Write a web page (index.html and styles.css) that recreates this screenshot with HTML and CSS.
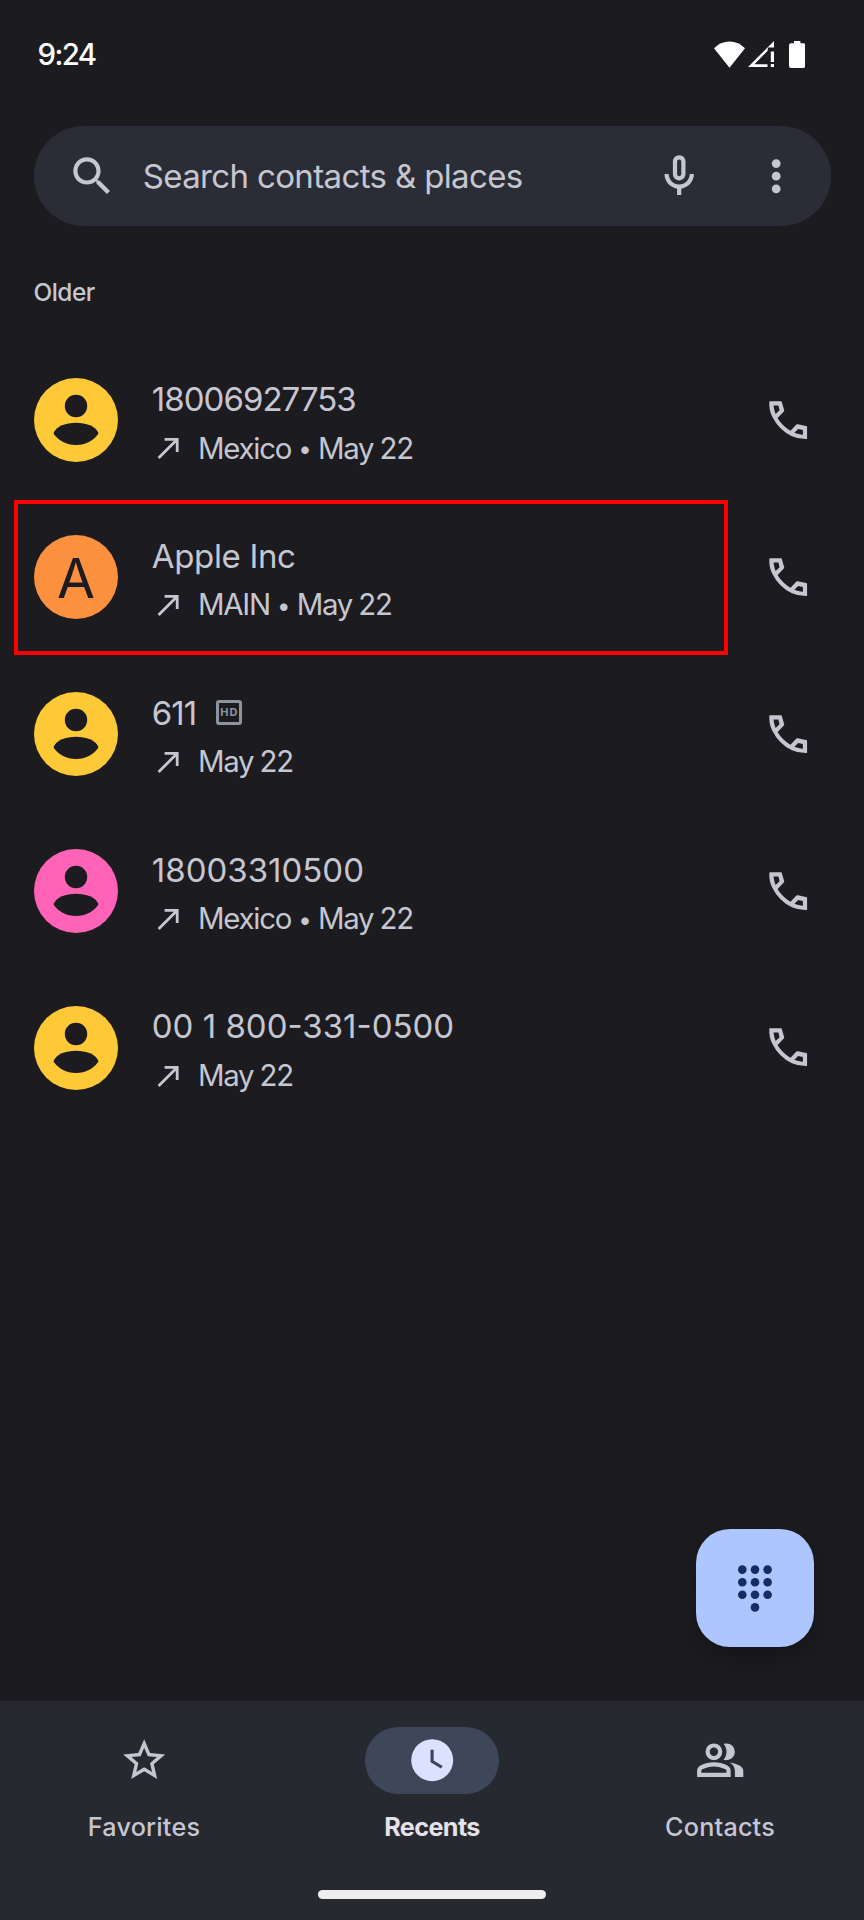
FILE: index.html
```html
<!DOCTYPE html>
<html lang="en">
<head>
<meta charset="utf-8">
<title>Phone - Recents</title>
<link rel="stylesheet" href="styles.css">
</head>
<body>
<svg class="defs" aria-hidden="true">
  <symbol id="call" viewBox="0 0 24 24"><path fill-rule="evenodd" d="M20.6 21Q17 21.05 13.78 19.64T8.225 15.775 4.363 10.225 3 3.4Q3 3 3.4 3H8.6Q8.9 3 9 3.4L10.1 7.3Q10.15 7.6 9.9 7.9L6.975 10.9q.5.925 1.187 1.788t1.513 1.662q.775.775 1.625 1.438t1.8 1.212L15.9 14.1Q16.2 13.8 16.6 13.9L20.5 14.8Q21 14.9 21 15.3V20.6Q21 21 20.6 21ZM6.025 9l1.85-1.75L7.35 5H5.025q.125 1.025.35 2.025T6.025 9Zm8.95 8.95q.975.425 1.988.675t2.037.325v-2.3l-2.25-.5Z"/></symbol>
  <symbol id="made" viewBox="0 0 24 24"><path d="M9 5v2h6.59L4 18.59 5.41 20 17 8.41V15h2V5z"/></symbol>
  <symbol id="person" viewBox="0 0 84 84"><circle cx="42" cy="28" r="11.2"/><path d="M19.8 54.6C22 48.3 32 44.7 42 44.7S62 48.3 64.2 54.6Q64.5 55.6 63.8 56.6C59 63 52 67 42 67S25 63 20.2 56.6Q19.5 55.6 19.8 54.6Z"/></symbol>
</svg>
<div class="screen">
  <header class="status">
    <span class="time">9:24</span>
    <span class="status-icons">
      <svg class="wifi" viewBox="0 0 31 27"><path d="M0 7.3Q6.5.5 15.5.5T31 7.3L15.5 26.8Z"/></svg>
      <svg class="signal" viewBox="0 0 26 26"><path fill-rule="evenodd" d="M26 0V6.5H20L19.5 10 6.5 23.2H19.5V26H0ZM22.8 10.5H26V21H22.8ZM22.8 23H26V26H22.8Z"/></svg>
      <svg class="battery" viewBox="0 0 16.4 27"><path d="M5 0H11.4V2.2H14.4Q16.4 2.2 16.4 4.2V25Q16.4 27 14.4 27H2Q0 27 0 25V4.2Q0 2.2 2 2.2H5Z"/></svg>
    </span>
  </header>

  <div class="search">
    <svg class="icon" viewBox="0 0 24 24"><path d="M15.5 14h-.79l-.28-.27C15.41 12.59 16 11.11 16 9.5 16 5.91 13.09 3 9.5 3S3 5.91 3 9.5 5.91 16 9.5 16c1.61 0 3.09-.59 4.23-1.57l.27.28v.79l5 4.99L20.49 19l-4.99-5zm-6 0C7.01 14 5 11.99 5 9.5S7.01 5 9.5 5 14 7.01 14 9.5 11.99 14 9.5 14z"/></svg>
    <span class="placeholder">Search contacts &amp; places</span>
    <svg class="icon mic" viewBox="0 0 24 24"><path fill-rule="evenodd" d="M12 14c1.66 0 3-1.34 3-3V5c0-1.66-1.34-3-3-3S9 3.34 9 5v6c0 1.66 1.34 3 3 3zM11 5c0-.55.45-1 1-1s1 .45 1 1v6c0 .55-.45 1-1 1s-1-.45-1-1V5zM17 11c0 2.76-2.24 5-5 5s-5-2.24-5-5H5c0 3.53 2.61 6.43 6 6.92V21h2v-3.08c3.39-.49 6-3.39 6-6.92h-2z"/></svg>
    <svg class="icon" viewBox="0 0 24 24"><circle cx="12" cy="6" r="2.1"/><circle cx="12" cy="12" r="2.1"/><circle cx="12" cy="18" r="2.1"/></svg>
  </div>

  <h2 class="section">Older</h2>

  <main class="calls">
    <div class="call">
      <svg class="avatar yellow"><use href="#person"/></svg>
      <div class="info">
        <div class="name mixed">18006927753</div>
        <div class="detail"><svg class="made"><use href="#made"/></svg><span class="where">Mexico <span class="dot">•</span> May 22</span></div>
      </div>
      <svg class="icon dial"><use href="#call"/></svg>
    </div>
    <div class="call marked">
      <div class="avatar orange">A</div>
      <div class="info">
        <div class="name">Apple Inc</div>
        <div class="detail"><svg class="made"><use href="#made"/></svg><span class="where">MAIN <span class="dot">•</span> May 22</span></div>
      </div>
      <svg class="icon dial"><use href="#call"/></svg>
    </div>
    <div class="call">
      <svg class="avatar yellow"><use href="#person"/></svg>
      <div class="info">
        <div class="name mixed">611<span class="hd">HD</span></div>
        <div class="detail"><svg class="made"><use href="#made"/></svg><span class="where">May 22</span></div>
      </div>
      <svg class="icon dial"><use href="#call"/></svg>
    </div>
    <div class="call">
      <svg class="avatar pink"><use href="#person"/></svg>
      <div class="info">
        <div class="name round">18003310500</div>
        <div class="detail"><svg class="made"><use href="#made"/></svg><span class="where">Mexico <span class="dot">•</span> May 22</span></div>
      </div>
      <svg class="icon dial"><use href="#call"/></svg>
    </div>
    <div class="call">
      <svg class="avatar yellow"><use href="#person"/></svg>
      <div class="info">
        <div class="name round">00 1 800-331-0500</div>
        <div class="detail"><svg class="made"><use href="#made"/></svg><span class="where">May 22</span></div>
      </div>
      <svg class="icon dial"><use href="#call"/></svg>
    </div>
  </main>

  <div class="fab">
    <svg class="keypad" viewBox="0 0 34 47"><circle cx="4.3" cy="4.6" r="4.3"/><circle cx="17" cy="4.6" r="4.3"/><circle cx="29.6" cy="4.6" r="4.3"/><circle cx="4.3" cy="17.2" r="4.3"/><circle cx="17" cy="17.2" r="4.3"/><circle cx="29.6" cy="17.2" r="4.3"/><circle cx="4.3" cy="29.8" r="4.3"/><circle cx="17" cy="29.8" r="4.3"/><circle cx="29.6" cy="29.8" r="4.3"/><circle cx="17" cy="42.4" r="4.3"/></svg>
  </div>

  <nav class="nav">
    <div class="tabs">
      <div class="tab">
        <span class="pill"><svg class="icon" viewBox="0 0 24 24"><path d="M22 9.24l-7.19-.62L12 2 9.19 8.63 2 9.24l5.46 4.73L5.82 21 12 17.27 18.18 21l-1.63-7.03L22 9.24zM12 15.4l-3.76 2.27 1-4.28-3.32-2.88 4.38-.38L12 6.1l1.71 4.04 4.38.38-3.32 2.88 1 4.28L12 15.4z"/></svg></span>
        <span class="label">Favorites</span>
      </div>
      <div class="tab active">
        <span class="pill"><svg class="icon" viewBox="0 0 24 24"><path fill-rule="evenodd" d="M12 2a10 10 0 1 0 0 20 10 10 0 0 0 0-20zm4.2 14L11.2 13V7h1.5v5.2l4.3 2.55z"/></svg></span>
        <span class="label">Recents</span>
      </div>
      <div class="tab">
        <span class="pill"><svg class="icon" viewBox="0 0 24 24"><path fill-rule="evenodd" d="M1 20v-2.8q0-.85.438-1.562T2.6 14.55q1.55-.775 3.15-1.163T9 13t3.25.388 3.15 1.162q.725.375 1.163 1.088T17 17.2V20Zm18 0v-3q0-1.1-.612-2.113T16.65 13.15q1.275.15 2.4.513t2.1.887q.9.5 1.375 1.112T23 17v3ZM9 12q-1.65 0-2.825-1.175T5 8t1.175-2.825T9 4t2.825 1.175T13 8t-1.175 2.825T9 12Zm10-4q0 1.65-1.175 2.825T15 12q-.275 0-.7-.063T13.6 11.8q.675-.8 1.037-1.775T15 8t-.363-2.025T13.6 4.2q.35-.125.7-.163T15 4q1.65 0 2.825 1.175T19 8ZM3 18h12v-.8q0-.275-.137-.5t-.363-.35q-1.35-.675-2.725-1.013T9 15t-2.775.338T3.5 16.35q-.225.125-.363.35T3 17.2Zm6-8q.825 0 1.413-.588T11 8t-.588-1.413T9 6t-1.413.588T7 8t.588 1.413T9 10Z"/></svg></span>
        <span class="label">Contacts</span>
      </div>
    </div>
    <div class="home"></div>
  </nav>
</div>
</body>
</html>
```
FILE: styles.css
```css
*, *::after { box-sizing: border-box; }

body {
  margin: 0;
  background: #1c1b20;
  color: #c5c6d0;
  font-family: Inter, Roboto, sans-serif;
}

.defs { display: none; }

svg { display: block; fill: currentColor; flex: none; }

.screen {
  position: relative;
  display: flex;
  flex-direction: column;
  width: 864px;
  height: 1920px;
  overflow: hidden;
}

.icon { width: 50.4px; height: 50.4px; }

/* Status bar */
.status {
  display: flex;
  justify-content: space-between;
  align-items: center;
  height: 108.8px;
  padding: 0 59px 0 37.5px;
  color: #fff;
}
.time { font-size: 29.4px; font-weight: 500; letter-spacing: -1.6px; }
.status-icons { display: flex; align-items: center; }
.wifi { width: 31px; height: 27px; }
.signal { width: 26px; height: 26px; margin-left: 3px; }
.battery { width: 16.4px; height: 27px; margin-left: 14.6px; }

/* Search field */
.search {
  display: flex;
  align-items: center;
  height: 100.5px;
  margin: 16.9px 33.5px 0;
  padding: 0 29.2px 0 33.8px;
  border-radius: 50.25px;
  background: #2b2d36;
}
.placeholder {
  flex: 1;
  margin-left: 25px;
  font-size: 33px;
  letter-spacing: -0.64px;
  white-space: nowrap;
}
.mic { margin-right: 47px; }

.section {
  margin: 45.9px 33.5px 0;
  font-size: 24.4px;
  font-weight: 500;
  line-height: 40px;
  letter-spacing: -0.5px;
}

/* Call log */
.calls { margin-top: 29.9px; }
.call {
  position: relative;
  display: flex;
  align-items: center;
  height: 156.8px;
  padding: 0 50.3px 0 34px;
}
.marked::after {
  content: "";
  position: absolute;
  top: 1px;
  left: 14px;
  width: 713.5px;
  height: 155.5px;
  border: 4px solid #f00;
}
.avatar {
  width: 84px;
  height: 84px;
  flex: none;
  border-radius: 50%;
  color: #1c1b20;
}
.yellow { background: #fdc937; }
.pink { background: #ff63b8; }
.orange {
  background: #fb903e;
  font-size: 55px;
  line-height: 86px;
  text-align: center;
}
.info { flex: 1; margin-left: 34.4px; padding-top: 6.6px; }
.name {
  display: flex;
  align-items: center;
  height: 40px;
  margin-left: -0.6px;
  font-size: 33px;
  letter-spacing: -0.35px;
  white-space: nowrap;
}
.mixed { letter-spacing: -0.97px; }
.round { letter-spacing: 0; }
.detail {
  display: flex;
  align-items: center;
  height: 40px;
  margin-top: 9px;
  font-size: 29.4px;
  letter-spacing: -1.25px;
  word-spacing: -0.8px;
}
.made { width: 33.6px; height: 33.6px; }
.where { margin-left: 12px; }
.dot { margin: 0 1.2px 0 1px; font-size: 24px; line-height: 1; vertical-align: 1.5px; }
.hd {
  width: 25.4px;
  height: 25.4px;
  margin-left: 20px;
  border: 3px solid #8b959b;
  border-radius: 3px;
  color: #8b959b;
  font-size: 11px;
  font-weight: 700;
  line-height: 19.4px;
  letter-spacing: 1px;
  text-indent: 1px;
  text-align: center;
}

/* Dial pad button */
.fab {
  position: absolute;
  left: 696px;
  top: 1529.4px;
  display: flex;
  align-items: center;
  justify-content: center;
  width: 118px;
  height: 118px;
  border-radius: 34px;
  background: #aec6ff;
  color: #112f60;
  box-shadow: 0 10px 24px rgba(0, 0, 0, 0.25);
}
.keypad { width: 34px; height: 47px; }

/* Bottom navigation */
.nav {
  display: flex;
  flex-direction: column;
  height: 218.8px;
  margin-top: auto;
  padding-top: 25.8px;
  background: #272930;
}
.tabs { display: grid; grid-template-columns: repeat(3, 1fr); }
.tab { display: flex; flex-direction: column; align-items: center; }
.pill {
  display: flex;
  align-items: center;
  justify-content: center;
  width: 134.4px;
  height: 67.2px;
  border-radius: 34px;
}
.active .pill { background: #3e4659; color: #dbe2ff; }
.label {
  margin-top: 12.8px;
  font-size: 25.2px;
  font-weight: 500;
  line-height: 40px;
  letter-spacing: 0.2px;
}
.active .label { color: #e4e2e8; font-weight: 700; letter-spacing: -0.6px; }
.home {
  align-self: center;
  width: 228px;
  height: 9.4px;
  margin-top: 43px;
  border-radius: 5px;
  background: #eee;
}
```
